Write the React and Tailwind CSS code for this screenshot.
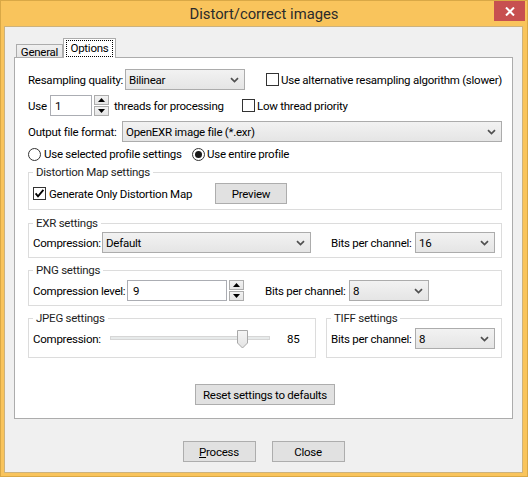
import React from "react";

function Chevron() {
  return (
    <svg width="9" height="6" viewBox="0 0 9 6">
      <path d="M1 1.2 L4.5 4.6 L8 1.2" fill="none" stroke="#505050" strokeWidth="1.7" />
    </svg>
  );
}

function Select({ className, value }) {
  return (
    <div
      className={
        "flex h-[21px] shrink-0 items-center justify-between border border-[#ACACAC] bg-linear-to-b from-[#F2F2F2] to-[#E5E5E5] pl-[3px] pr-[5px] " +
        className
      }
    >
      <span>{value}</span>
      <Chevron />
    </div>
  );
}

function Check({ checked }) {
  return (
    <div className="flex h-[13px] w-[13px] shrink-0 items-center justify-center border border-[#333333] bg-white">
      {checked && (
        <svg width="11" height="11" viewBox="0 0 11 11">
          <path d="M1.6 5.4 L4 8.3 L9.4 1.9" fill="none" stroke="#000" strokeWidth="1.8" />
        </svg>
      )}
    </div>
  );
}

function Radio({ checked }) {
  return (
    <div className="flex h-[13px] w-[13px] shrink-0 items-center justify-center rounded-full border border-[#333333] bg-white">
      {checked && <div className="h-[7px] w-[7px] rounded-full bg-[#1a1a1a]" />}
    </div>
  );
}

function Spin() {
  return (
    <div className="flex h-[21px] w-[15px] shrink-0 flex-col gap-[1px]">
      <div className="flex flex-1 items-center justify-center border border-[#ACACAC] bg-linear-to-b from-[#F2F2F2] to-[#E5E5E5]">
        <svg width="7" height="4" viewBox="0 0 7 4">
          <path d="M0 4 L3.5 0 L7 4Z" fill="#000" />
        </svg>
      </div>
      <div className="flex flex-1 items-center justify-center border border-[#ACACAC] bg-linear-to-b from-[#F2F2F2] to-[#E5E5E5]">
        <svg width="7" height="4" viewBox="0 0 7 4">
          <path d="M0 0 L3.5 4 L7 0Z" fill="#000" />
        </svg>
      </div>
    </div>
  );
}

function Btn({ className, children }) {
  return (
    <div
      className={
        "flex h-[21px] shrink-0 items-center justify-center border border-[#ADADAD] bg-[#E1E1E1] " + className
      }
    >
      {children}
    </div>
  );
}

function Group({ title, className, children }) {
  return (
    <div className={"relative shrink-0 border border-[#DCDCDC] " + className}>
      <span className="absolute -top-[9px] left-[4px] bg-white px-[3px] leading-[16px] text-[#1e1e1e]">{title}</span>
      {children}
    </div>
  );
}

export default function App() {
  return (
    <div className="flex h-[477px] w-[528px] flex-col whitespace-nowrap border border-[#D9A846] bg-[#F9C45C] text-[11.5px] leading-[16px] tracking-[-0.25px] text-black font-['Roboto',sans-serif]">
      {/* Title bar */}
      <div className="grid h-[25px] shrink-0 grid-cols-[35px_1fr_35px]">
        <div />
        <div className="flex items-center justify-center text-[14.8px] tracking-normal text-[#2b2b2b]">Distort/correct images</div>
        <div className="flex justify-end pr-[2px]">
          <div className="flex h-[20px] w-[31px] items-center justify-center bg-[#C75050]">
            <svg width="10" height="9" viewBox="0 0 10 9">
              <path d="M1 0.5 L9 8.5 M9 0.5 L1 8.5" stroke="#fff" strokeWidth="2" />
            </svg>
          </div>
        </div>
      </div>

      {/* Client */}
      <div className="mb-[3px] ml-[3px] mr-[4px] flex flex-1 flex-col border border-[#CDB27C] bg-[#F0F0F0] px-[9px] pt-[11px]">
        {/* Tabs */}
        <div className="relative z-10 flex h-[19px] items-end pl-[2px]">
          <div className="flex h-[13px] w-[47px] items-center justify-center border border-b-0 border-[#ACACAC] bg-linear-to-b from-[#F0F0F0] to-[#E5E5E5] pt-[1px]">
            General
          </div>
          <div className="-mb-[1px] flex h-[20px] w-[53px] items-start justify-center border border-b-0 border-[#ACACAC] bg-white pt-[1px]">
            <span className="border border-dotted border-black px-[3px] leading-[15px]">Options</span>
          </div>
        </div>

        {/* Panel */}
        <div className="flex flex-col border border-[#ACACAC] bg-white pb-[13px] pl-[13px] pr-[10px]">
          <div className="mt-[11px] flex h-[21px] items-center">
            <span className="w-[97px] shrink-0">Resampling quality:</span>
            <Select className="w-[120px]" value="Bilinear" />
            <div className="ml-[21px] flex items-center gap-[2px]">
              <Check />
              <span>Use alternative resampling algorithm (slower)</span>
            </div>
          </div>

          <div className="mt-[5px] flex h-[21px] items-center">
            <span className="w-[22px] shrink-0">Use</span>
            <div className="flex h-[21px] w-[42px] shrink-0 items-center border border-[#ABADB3] pl-[4px]">1</div>
            <div className="ml-[2px]">
              <Spin />
            </div>
            <span className="ml-[5px] w-[128px] shrink-0">threads for processing</span>
            <div className="flex items-center gap-[2px]">
              <Check />
              <span>Low thread priority</span>
            </div>
          </div>

          <div className="mt-[5px] flex h-[21px] items-center">
            <span className="w-[94px] shrink-0">Output file format:</span>
            <Select className="flex-1" value="OpenEXR image file (*.exr)" />
          </div>

          <div className="mt-[5px] flex h-[14px] items-center">
            <div className="flex w-[164px] shrink-0 items-center gap-[3px]">
              <Radio />
              <span>Use selected profile settings</span>
            </div>
            <div className="flex items-center gap-[2px]">
              <Radio checked />
              <span>Use entire profile</span>
            </div>
          </div>

          <Group title="Distortion Map settings" className="mt-[11px] h-[38px] pl-[4px] pt-[10px]">
            <div className="flex h-[21px] items-center">
              <div className="flex w-[182px] shrink-0 items-center gap-[3px]">
                <Check checked />
                <span>Generate Only Distortion Map</span>
              </div>
              <Btn className="w-[72px]">Preview</Btn>
            </div>
          </Group>

          <Group title="EXR settings" className="mt-[13px] h-[35px] pl-[4px] pt-[8px]">
            <div className="flex h-[21px] items-center">
              <span className="w-[69px] shrink-0">Compression:</span>
              <Select className="w-[209px]" value="Default" />
              <span className="ml-[20px] w-[84px] shrink-0">Bits per channel:</span>
              <Select className="w-[80px]" value="16" />
            </div>
          </Group>

          <Group title="PNG settings" className="mt-[12px] h-[36px] pl-[4px] pt-[9px]">
            <div className="flex h-[21px] items-center">
              <span className="w-[94px] shrink-0">Compression level:</span>
              <div className="flex h-[21px] w-[100px] shrink-0 items-center border border-[#ABADB3] pl-[5px]">9</div>
              <div className="ml-[2px]">
                <Spin />
              </div>
              <span className="ml-[21px] w-[84px] shrink-0">Bits per channel:</span>
              <Select className="w-[80px]" value="8" />
            </div>
          </Group>

          <div className="mt-[12px] flex">
            <Group title="JPEG settings" className="h-[40px] w-[288px] pl-[4px] pt-[11px]">
              <div className="flex h-[18px] items-center">
                <span className="w-[77px] shrink-0">Compression:</span>
                <div className="relative h-[18px] w-[160px] shrink-0">
                  <div className="mt-[6px] h-[4px] w-[160px] border border-[#D6D6D6] bg-[#E7EAEA]" />
                  <svg className="absolute left-[127px] top-0" width="11" height="19" viewBox="0 0 11 19">
                    <defs>
                      <linearGradient id="th" x1="0" y1="0" x2="0" y2="1">
                        <stop offset="0" stopColor="#F5F5F5" />
                        <stop offset="1" stopColor="#E3E3E3" />
                      </linearGradient>
                    </defs>
                    <path d="M0.5 0.5 H10.5 V13 L5.5 18 L0.5 13 Z" fill="url(#th)" stroke="#A8A8A8" />
                  </svg>
                </div>
                <span className="ml-[17px]">85</span>
              </div>
            </Group>
            <Group title="TIFF settings" className="ml-[10px] h-[40px] flex-1 pl-[4px] pt-[9px]">
              <div className="flex h-[21px] items-center">
                <span className="w-[84px] shrink-0">Bits per channel:</span>
                <Select className="w-[80px]" value="8" />
              </div>
            </Group>
          </div>

          <div className="mt-[26px] flex justify-center">
            <Btn className="w-[140px]">Reset settings to defaults</Btn>
          </div>
        </div>

        {/* Bottom buttons */}
        <div className="mt-[22px] flex justify-center gap-[16px]">
          <Btn className="w-[73px]">
            <span>
              <span className="underline">P</span>rocess
            </span>
          </Btn>
          <Btn className="w-[73px]">Close</Btn>
        </div>
      </div>
    </div>
  );
}
